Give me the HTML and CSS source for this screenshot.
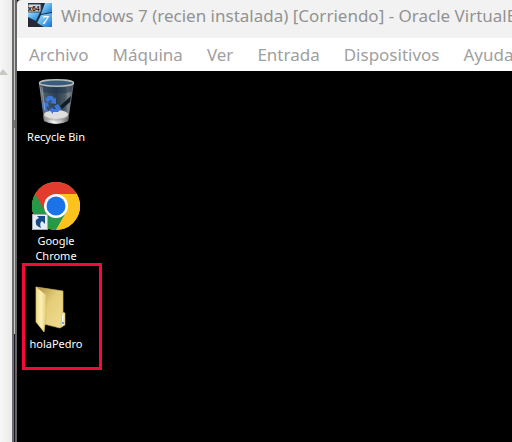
FILE: index.html
```html
<!DOCTYPE html>
<html lang="es">
<head>
<meta charset="utf-8">
<meta name="viewport" content="width=device-width, initial-scale=1">
<title>Windows 7 (recien instalada) [Corriendo] - Oracle VirtualBox</title>
<link rel="stylesheet" href="styles.css">
</head>
<body>
<div class="screen">
  <aside class="behind">
    <svg class="scroll-up" width="8" height="6" viewBox="0 0 8 6" aria-hidden="true"><path d="M-2 6L3 0L8 6Z" fill="#c9c8c2"/></svg>
  </aside>
  <div class="edge"></div>
  <main class="window">
    <header class="titlebar">
      <svg class="app-icon" width="24" height="24" viewBox="0 0 24 24" aria-hidden="true">
        <defs>
          <linearGradient id="pane" x1="0" y1="0" x2="1" y2="1"><stop offset="0" stop-color="#b9e3fb"/><stop offset=".5" stop-color="#5cb2ee"/><stop offset="1" stop-color="#1670c8"/></linearGradient>
        </defs>
        <rect width="24" height="24" fill="#1c2c40"/>
        <path d="M0 7H13L8 18L0 14Z" fill="url(#pane)"/>
        <path d="M17 0H24V9L13 11Z" fill="url(#pane)"/>
        <path d="M13 12L24 10V24H16L9 20Z" fill="url(#pane)"/>
        <path d="M0 15L8 19L14 24H0Z" fill="#252b36"/>
        <rect x="0" y="1" width="13" height="8" rx="1" fill="#d3dadc" stroke="#3b434a"/>
        <text x="0" y="8" class="badge-text">x64</text>
        <text x="14" y="21" class="seven-text">7</text>
      </svg>
      <h1 class="title">Windows 7 (recien instalada) [Corriendo] - Oracle VirtualBox</h1>
    </header>
    <nav class="menu">
      <button type="button">Archivo</button>
      <button type="button">Máquina</button>
      <button type="button">Ver</button>
      <button type="button">Entrada</button>
      <button type="button">Dispositivos</button>
      <button type="button">Ayuda</button>
    </nav>
    <section class="desktop">
      <div class="item">
        <svg width="48" height="48" viewBox="0 0 48 48" aria-hidden="true">
          <defs>
            <linearGradient id="glass" x1="0" x2="1"><stop offset="0" stop-color="#9aa5ad"/><stop offset=".14" stop-color="#4a5a68"/><stop offset=".5" stop-color="#2b3f52"/><stop offset=".74" stop-color="#4b5964"/><stop offset=".84" stop-color="#7b858c"/><stop offset="1" stop-color="#50585e"/></linearGradient>
            <linearGradient id="base" x1="0" x2="1"><stop offset="0" stop-color="#777"/><stop offset=".4" stop-color="#f4f4f4"/><stop offset=".7" stop-color="#bdbdbd"/><stop offset="1" stop-color="#555"/></linearGradient>
          </defs>
          <path d="M7 5L12 43Q24 49 36 43L42 5Z" fill="url(#glass)"/>
          <path d="M8 7Q24 12 41 7L39 14Q25 17 10 14Z" fill="#1d344b" opacity=".5"/>
          <ellipse cx="24.500" cy="5" rx="17" ry="3.200" fill="#3a5c7a" stroke="#b8bec2" stroke-width="1.400"/>
          <path d="M39 18L28 28L30 31L38 24Z" fill="#101b27"/>
          <path d="M11 37L12 43Q24 49 36 43L37 37Z" fill="url(#base)"/>
          <ellipse cx="24" cy="36.500" rx="12" ry="4.500" fill="#dededc"/>
          <path d="M12 38Q24 44 36 38L36 40Q24 46 13 40Z" fill="#999" opacity=".5"/>
          <g fill="#3c78dc">
            <path d="M13 21L16 18H20L23 21L24 19V26L18 25L20 23L18 22L16 25Z"/>
            <path d="M11 24L16 25L17 29L15 28L14 30L17 34L12 32L10 28Z"/>
            <path d="M22 28L26 26L29 31L26 34H21V36L17 32L21 29V31H24Z"/>
          </g>
          <path d="M10 9L14 41" stroke="#c1cad0" opacity=".5"/>
        </svg>
        <span class="label">Recycle Bin</span>
      </div>
      <div class="item item-chrome">
        <svg width="48" height="48" viewBox="0 0 48 48" aria-hidden="true">
          <circle cx="24" cy="24" r="24" fill="#fcc31e"/>
          <path d="M24 24L3.200 12A24 24 0 0 0 24 48L34.400 30Z" fill="#279847"/>
          <path d="M3.200 12A24 24 0 0 1 44.800 12H24L13.600 30Z" fill="#e33b2e"/>
          <path d="M24 48L34.400 30L24 24V12H44.800A24 24 0 0 1 24 48Z" fill="#fcc31e"/>
          <circle cx="24" cy="24" r="12" fill="#fff"/>
          <circle cx="24" cy="24" r="9.500" fill="#1a73e8"/>
          <rect x=".5" y="32.500" width="15" height="15" fill="#e6edf3" stroke="#a5adb5"/>
          <path d="M5 34H13V42L10 39Q7 41 9 46Q2 43 4 38Q5 37 7 36Z" fill="#174b87"/>
        </svg>
        <span class="label">Google<br>Chrome</span>
      </div>
      <div class="item item-marked">
        <svg width="48" height="48" viewBox="0 0 48 48" aria-hidden="true">
          <defs>
            <linearGradient id="front" x1="0" x2="1"><stop offset="0" stop-color="#f2dc8b"/><stop offset=".5" stop-color="#fbf0b4"/><stop offset="1" stop-color="#e6cb75"/></linearGradient>
            <linearGradient id="back" x1="0" x2="1" y2="1"><stop offset="0" stop-color="#a88b42"/><stop offset=".45" stop-color="#e4cd78"/><stop offset="1" stop-color="#f1de92"/></linearGradient>
          </defs>
          <path d="M4 2L31 6V41L28 43L12 39Z" fill="url(#back)" stroke="#cdb568" stroke-width=".7"/>
          <path d="M30 27L33 28V40L29 42Z" fill="#f3e7ad" stroke="#cdb568" stroke-width=".6"/>
          <path d="M30 30H31V40H30Z" fill="#fff"/><path d="M30 37H32V39H30Z" fill="#6ba6dc"/>
          <path d="M4 2L13 9Q15 10 14 13V31L12 47L4 37Z" fill="url(#front)" stroke="#d8bd69" stroke-width=".7"/>
        </svg>
        <span class="label">holaPedro</span>
      </div>
    </section>
  </main>
</div>
</body>
</html>
```

FILE: styles.css
```css
* { box-sizing: border-box; }

body {
  margin: 0;
  overflow: hidden;
  font-family: "Noto Sans", "Open Sans", sans-serif;
}

.screen {
  display: flex;
  min-height: 100vh;
}

.behind {
  flex: 0 0 12px;
  padding-top: 69px;
  background: linear-gradient(90deg, #f7f7f7, #e9e9e9);
}

.scroll-up { display: block; }

.edge {
  flex: 0 0 5px;
  border-left: 2px solid #6b6b6b;
  border-right: 2px solid #666;
  background: linear-gradient(#c8c8c8 0 120px, #777 120px 128px, #c8c8c8 128px 334px, #181824 334px);
}

.window {
  flex: 1;
  min-width: 0;
  display: flex;
  flex-direction: column;
  overflow: hidden;
  background: #000;
}

.titlebar {
  display: flex;
  align-items: center;
  gap: 9px;
  height: 38px;
  padding: 0 0 8px 11px;
  background: #f2f2f2;
  border-top-left-radius: 4px;
}

.app-icon { flex: none; }

.badge-text {
  font: bold 7px "Liberation Sans", sans-serif;
  fill: #111;
}

.seven-text {
  font: italic bold 13px "Liberation Serif", serif;
  fill: #fff;
}

.title {
  margin: 0;
  padding-top: 2px;
  font-size: 17px;
  font-weight: 400;
  line-height: 24px;
  white-space: nowrap;
  color: #929292;
}

.menu {
  display: flex;
  gap: 24px;
  height: 33px;
  padding-left: 12px;
  background: #fff;
}

.menu button {
  flex: none;
  padding: 0;
  border: 0;
  background: none;
  font: 17px "Noto Sans", "Open Sans", sans-serif;
  color: #a0a0a0;
}

.desktop {
  flex: 1;
  padding: 7px 0 0 5px;
  background: #000;
}

.item {
  display: flex;
  flex-direction: column;
  align-items: center;
  gap: 3px;
  width: 68px;
}

.item-chrome { margin-top: 38px; }

.label {
  font-size: 11px;
  line-height: 15px;
  text-align: center;
  color: #fff;
}

.item-marked {
  width: 80px;
  height: 107px;
  padding: 19px 12px 0 0;
  border: 3px solid #f8093b;
}
```
